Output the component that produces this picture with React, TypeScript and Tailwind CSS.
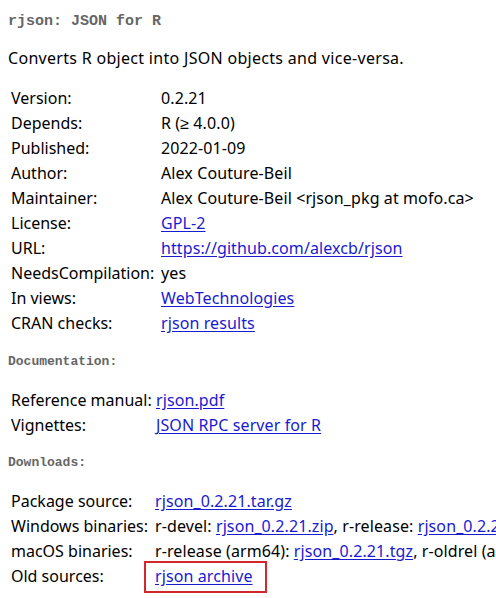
import React from "react";

type Row = { label: string; value: React.ReactNode };

const A = ({ children }: { children: React.ReactNode }) => (
  <a href="#" className="text-[#1a1ad0] underline underline-offset-[2px]">
    {children}
  </a>
);

const InfoTable = ({ rows, labelWidth }: { rows: Row[]; labelWidth: string }) => (
  <table className="border-separate border-spacing-[2px]">
    <tbody>
      {rows.map((r) => (
        <tr key={r.label} className="h-[23px] align-middle">
          <td className={`${labelWidth} px-[1px] leading-[23px] whitespace-nowrap`}>{r.label}</td>
          <td className="px-[1px] leading-[23px] whitespace-nowrap tracking-[0.1px]">{r.value}</td>
        </tr>
      ))}
    </tbody>
  </table>
);

const Heading = ({ children, size }: { children: React.ReactNode; size: string }) => (
  <h4 className={`${size} font-bold text-[#666666] font-['Liberation_Mono','Courier_New',monospace]`}>
    {children}
  </h4>
);

export default function App() {
  const details: Row[] = [
    { label: "Version:", value: "0.2.21" },
    { label: "Depends:", value: "R (≥ 4.0.0)" },
    { label: "Published:", value: "2022-01-09" },
    { label: "Author:", value: "Alex Couture-Beil" },
    { label: "Maintainer:", value: "Alex Couture-Beil <rjson_pkg at mofo.ca>" },
    { label: "License:", value: <A>GPL-2</A> },
    { label: "URL:", value: <A>https://github.com/alexcb/rjson</A> },
    { label: "NeedsCompilation:", value: "yes" },
    { label: "In views:", value: <A>WebTechnologies</A> },
    { label: "CRAN checks:", value: <A>rjson results</A> },
  ];

  const docs: Row[] = [
    { label: "Reference manual:", value: <A>rjson.pdf</A> },
    { label: "Vignettes:", value: <A>JSON RPC server for R</A> },
  ];

  const downloads: Row[] = [
    { label: "Package source:", value: <A>rjson_0.2.21.tar.gz</A> },
    {
      label: "Windows binaries:",
      value: (
        <>
          r-devel: <A>rjson_0.2.21.zip</A>, r-release: <A>rjson_0.2.21.zip</A>, r-oldrel:{" "}
          <A>rjson_0.2.21.zip</A>
        </>
      ),
    },
    {
      label: "macOS binaries:",
      value: (
        <>
          r-release (arm64): <A>rjson_0.2.21.tgz</A>, r-oldrel (arm64): <A>rjson_0.2.21.tgz</A>,
          r-release (x86_64): <A>rjson_0.2.21.tgz</A>
        </>
      ),
    },
    {
      label: "Old sources:",
      value: (
        <span className="relative">
          <A>rjson archive</A>
          <span className="absolute left-[-11px] right-[-14px] top-[-4px] bottom-[-6px] border-2 border-[#d2272c] pointer-events-none" />
        </span>
      ),
    },
  ];

  return (
    <div className="w-[496px] h-[598px] overflow-hidden bg-white text-black px-2 text-[16px] font-['Noto_Sans','Liberation_Sans',sans-serif]">
      <div className="pt-[13px]">
        <Heading size="text-[15px] leading-[18px]">rjson: JSON for R</Heading>
      </div>
      <p className="mt-[17px] leading-[21px] whitespace-nowrap tracking-[0.3px]">
        Converts R object into JSON objects and vice-versa.
      </p>
      <div className="mt-[16px]">
        <InfoTable rows={details} labelWidth="w-[148px] min-w-[148px]" />
      </div>
      <div className="mt-[17px]">
        <Heading size="text-[13px] leading-[16px]">Documentation:</Heading>
      </div>
      <div className="mt-[17px]">
        <InfoTable rows={docs} labelWidth="w-[143px] min-w-[143px]" />
      </div>
      <div className="mt-[16px]">
        <Heading size="text-[13px] leading-[16px]">Downloads:</Heading>
      </div>
      <div className="mt-[17px]">
        <InfoTable rows={downloads} labelWidth="w-[142px] min-w-[142px]" />
      </div>
    </div>
  );
}
